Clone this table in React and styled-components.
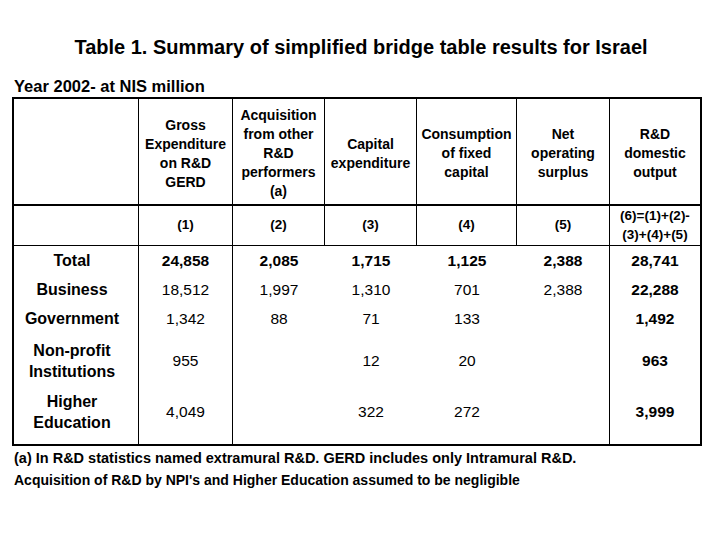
import React from "react";
import styled, { createGlobalStyle } from "styled-components";

const GlobalStyle = createGlobalStyle`
  html, body {
    margin: 0;
    padding: 0;
    background: #ffffff;
  }
  body {
    font-family: "Liberation Sans", Arial, Helvetica, sans-serif;
    color: #000000;
  }
`;

const Page = styled.div`
  width: 720px;
  height: 540px;
  padding-top: 36px;
  box-sizing: border-box;
`;

const Title = styled.h1`
  margin: 0;
  padding-left: 2px;
  font-size: 20px;
  line-height: 23px;
  font-weight: bold;
  text-align: center;
`;

const Subtitle = styled.div`
  margin: 18px 0 0 14px;
  font-size: 16.5px;
  line-height: 19px;
  font-weight: bold;
`;

const Table = styled.div`
  margin: 1px 0 0 12px;
  width: 690px;
  box-sizing: border-box;
  border: 2px solid #000;
  display: grid;
  grid-template-columns: 125px 94px 92px 92px 100px 93px 90px;
`;

const Cell = styled.div`
  box-sizing: border-box;
  display: flex;
  align-items: center;
  justify-content: center;
  text-align: center;
  border-right: ${(p) => (p.$divider ? "1px solid #000" : "none")};
`;

const HeadCell = styled(Cell)`
  height: 107px;
  padding-top: 4px;
  border-bottom: 2px solid #000;
  font-size: 14px;
  line-height: 19px;
  font-weight: bold;
`;

const IndexCell = styled(Cell)`
  height: 40px;
  border-bottom: 1px solid #000;
  font-size: 13.5px;
  line-height: 18.5px;
  font-weight: bold;
`;

const LabelCell = styled(Cell)`
  height: ${(p) => p.$h}px;
  padding-right: 8px;
  font-size: 16px;
  line-height: 21px;
  font-weight: bold;
`;

const ValueCell = styled(Cell)`
  height: ${(p) => p.$h}px;
  font-size: 15.5px;
  line-height: 21px;
  font-weight: ${(p) => (p.$bold ? "bold" : "normal")};
`;

const SpacerCell = styled(Cell)`
  height: 9px;
`;

const Notes = styled.div`
  margin: 1px 0 0 14px;
`;

const Note = styled.div`
  font-size: ${(p) => p.$size}px;
  line-height: 22px;
  font-weight: bold;
  white-space: nowrap;
`;

const headers = [
  [],
  ["Gross", "Expenditure", "on  R&D", "GERD"],
  ["Acquisition", "from other", "R&D", "performers", "(a)"],
  ["Capital", "expenditure"],
  ["Consumption", "of fixed", "capital"],
  ["Net", "operating", "surplus"],
  ["R&D", "domestic", "output"],
];

const indexes = [
  [],
  ["(1)"],
  ["(2)"],
  ["(3)"],
  ["(4)"],
  ["(5)"],
  ["(6)=(1)+(2)-", "(3)+(4)+(5)"],
];

const rows = [
  { label: ["Total"], h: 29, bold: true, values: ["24,858", "2,085", "1,715", "1,125", "2,388", "28,741"] },
  { label: ["Business"], h: 29, values: ["18,512", "1,997", "1,310", "701", "2,388", "22,288"] },
  { label: ["Government"], h: 29, values: ["1,342", "88", "71", "133", "", "1,492"] },
  { label: ["Non-profit", "Institutions"], h: 55, values: ["955", "", "12", "20", "", "963"] },
  { label: ["Higher", "Education"], h: 47, values: ["4,049", "", "322", "272", "", "3,999"] },
];

const dataDivider = [true, true, false, false, false, true, false];

const Lines = ({ lines }) =>
  lines.map((l, i) => (
    <React.Fragment key={i}>
      {i > 0 && <br />}
      {l}
    </React.Fragment>
  ));

export default function App() {
  return (
    <>
      <GlobalStyle />
      <Page>
        <Title>Table 1. Summary of simplified bridge table results for Israel</Title>
        <Subtitle>Year 2002- at NIS million</Subtitle>
        <Table>
          {headers.map((h, i) => (
            <HeadCell key={"h" + i} $divider={i < 6}>
              <div>
                <Lines lines={h} />
              </div>
            </HeadCell>
          ))}
          {indexes.map((h, i) => (
            <IndexCell key={"n" + i} $divider={i < 6}>
              <div>
                <Lines lines={h} />
              </div>
            </IndexCell>
          ))}
          {rows.map((r, ri) => (
            <React.Fragment key={"r" + ri}>
              <LabelCell $h={r.h} $divider>
                <div>
                  <Lines lines={r.label} />
                </div>
              </LabelCell>
              {r.values.map((v, ci) => (
                <ValueCell
                  key={ci}
                  $h={r.h}
                  $divider={dataDivider[ci + 1]}
                  $bold={r.bold || ci === 5}
                >
                  {v}
                </ValueCell>
              ))}
            </React.Fragment>
          ))}
          {dataDivider.map((d, i) => (
            <SpacerCell key={"s" + i} $divider={d} />
          ))}
        </Table>
        <Notes>
          <Note $size={14.5}>
            (a) In R&amp;D statistics named extramural R&amp;D. GERD includes only Intramural R&amp;D.
          </Note>
          <Note $size={14}>
            Acquisition of R&amp;D by NPI's and Higher Education assumed to be negligible
          </Note>
        </Notes>
      </Page>
    </>
  );
}
